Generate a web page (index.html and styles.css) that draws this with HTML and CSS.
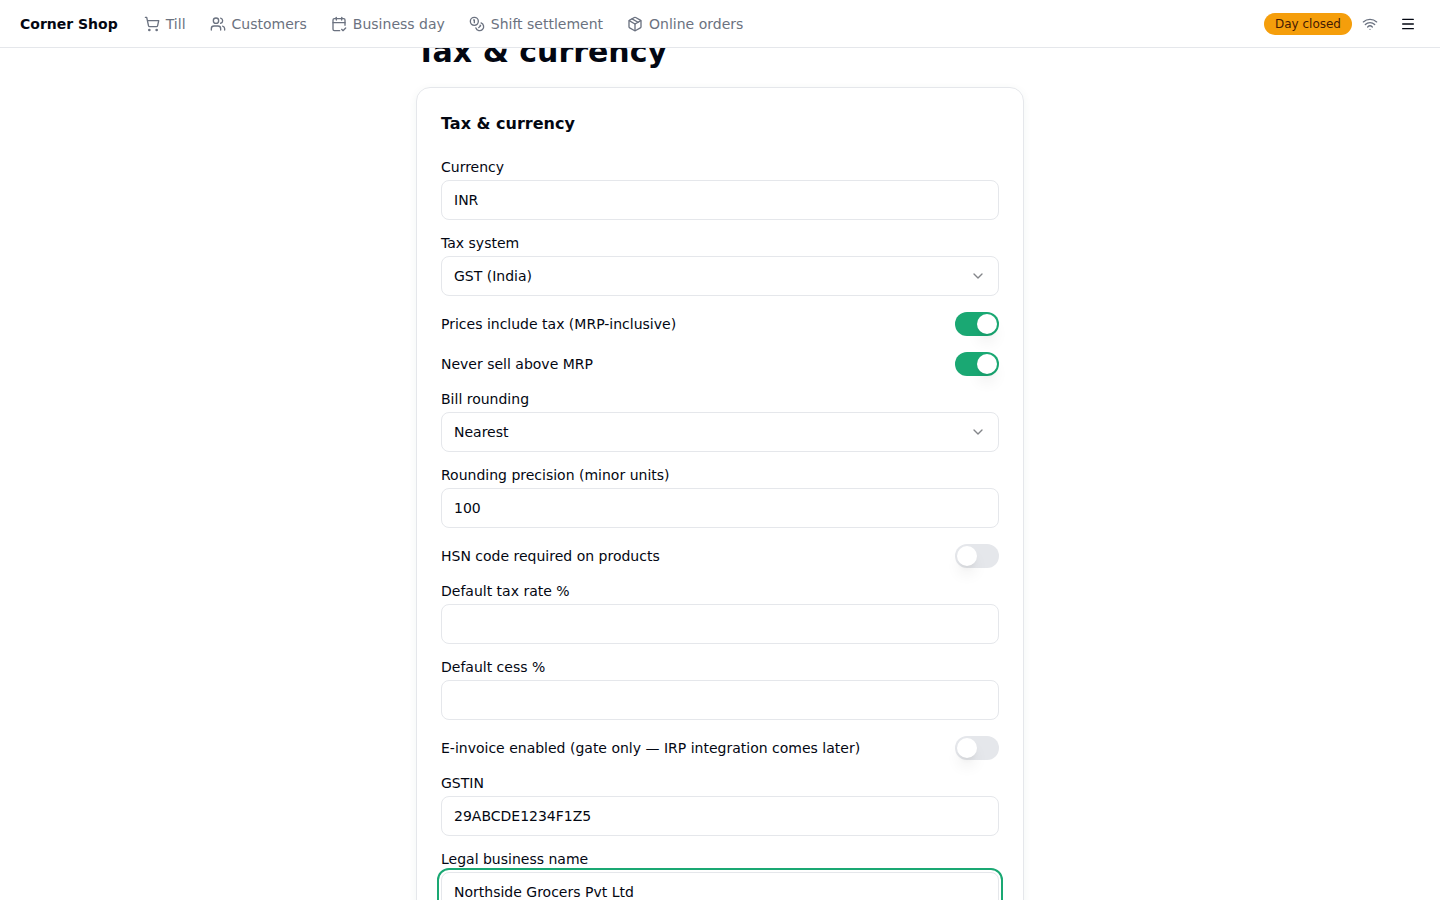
FILE: index.html
```html
<!DOCTYPE html>
<html lang="en">
<head>
<meta charset="utf-8">
<meta name="viewport" content="width=device-width, initial-scale=1">
<title>Tax &amp; currency</title>
<link rel="stylesheet" href="styles.css">
</head>
<body>
<header class="topbar">
  <a class="brand" href="#">Corner Shop</a>
  <nav class="nav" aria-label="Main">
    <a class="nav-link" href="#"><svg class="icon" viewBox="0 0 24 24" aria-hidden="true"><circle cx="8" cy="21" r="1"/><circle cx="19" cy="21" r="1"/><path d="M2.05 2.05h2l2.66 12.42a2 2 0 0 0 2 1.58h9.78a2 2 0 0 0 1.95-1.57l1.65-7.43H5.12"/></svg>Till</a>
    <a class="nav-link" href="#"><svg class="icon" viewBox="0 0 24 24" aria-hidden="true"><path d="M16 21v-2a4 4 0 0 0-4-4H6a4 4 0 0 0-4 4v2"/><path d="M16 3.128a4 4 0 0 1 0 7.744"/><path d="M22 21v-2a4 4 0 0 0-3-3.87"/><circle cx="9" cy="7" r="4"/></svg>Customers</a>
    <a class="nav-link" href="#"><svg class="icon" viewBox="0 0 24 24" aria-hidden="true"><path d="M8 2v4"/><path d="M16 2v4"/><path d="M21 14V6a2 2 0 0 0-2-2H5a2 2 0 0 0-2 2v14a2 2 0 0 0 2 2h8"/><path d="M3 10h18"/><path d="m16 20 2 2 4-4"/></svg>Business day</a>
    <a class="nav-link" href="#"><svg class="icon" viewBox="0 0 24 24" aria-hidden="true"><circle cx="8" cy="8" r="6"/><path d="M18.09 10.37A6 6 0 1 1 10.34 18"/><path d="M7 6h1v4"/><path d="m16.71 13.88.7.71-2.82 2.82"/></svg>Shift settlement</a>
    <a class="nav-link" href="#"><svg class="icon" viewBox="0 0 24 24" aria-hidden="true"><path d="M11 21.73a2 2 0 0 0 2 0l7-4A2 2 0 0 0 21 16V8a2 2 0 0 0-1-1.73l-7-4a2 2 0 0 0-2 0l-7 4A2 2 0 0 0 3 8v8a2 2 0 0 0 1 1.73z"/><path d="M12 22V12"/><path d="M3.29 7 12 12l8.71-5"/><path d="m7.5 4.27 9 5.15"/></svg>Online orders</a>
  </nav>
  <div class="status">
    <span class="badge">Day closed</span>
    <svg class="icon icon-muted" viewBox="0 0 24 24" role="img" aria-label="Online"><path d="M12 20h.01"/><path d="M2 8.82a15 15 0 0 1 20 0"/><path d="M5 12.859a10 10 0 0 1 14 0"/><path d="M8.5 16.429a5 5 0 0 1 7 0"/></svg>
    <button class="menu-button" type="button" aria-label="Menu"><svg class="icon icon-menu" viewBox="0 0 24 24" aria-hidden="true"><path d="M4 5h16"/><path d="M4 12h16"/><path d="M4 19h16"/></svg></button>
  </div>
</header>
<main class="page" id="page">
  <div class="content">
    <h1 class="page-title">Tax &amp; currency</h1>
    <form class="card">
      <h2 class="card-title">Tax &amp; currency</h2>
      <div class="fields">
        <div class="field">
          <label for="currency">Currency</label>
          <input class="control" id="currency" type="text" value="INR">
        </div>
        <div class="field">
          <label for="system">Tax system</label>
          <div class="select">
            <select class="control" id="system"><option>GST (India)</option></select>
            <svg class="icon chevron" viewBox="0 0 24 24" aria-hidden="true"><path d="m6 9 6 6 6-6"/></svg>
          </div>
        </div>
        <div class="toggle">
          <label for="inclusive">Prices include tax (MRP-inclusive)</label>
          <input class="switch" id="inclusive" type="checkbox" role="switch" checked>
        </div>
        <div class="toggle">
          <label for="mrp">Never sell above MRP</label>
          <input class="switch" id="mrp" type="checkbox" role="switch" checked>
        </div>
        <div class="field">
          <label for="rounding">Bill rounding</label>
          <div class="select">
            <select class="control" id="rounding"><option>Nearest</option></select>
            <svg class="icon chevron" viewBox="0 0 24 24" aria-hidden="true"><path d="m6 9 6 6 6-6"/></svg>
          </div>
        </div>
        <div class="field">
          <label for="precision">Rounding precision (minor units)</label>
          <input class="control" id="precision" type="text" inputmode="numeric" value="100">
        </div>
        <div class="toggle">
          <label for="hsn">HSN code required on products</label>
          <input class="switch" id="hsn" type="checkbox" role="switch">
        </div>
        <div class="field">
          <label for="rate">Default tax rate %</label>
          <input class="control" id="rate" type="text" inputmode="decimal">
        </div>
        <div class="field">
          <label for="cess">Default cess %</label>
          <input class="control" id="cess" type="text" inputmode="decimal">
        </div>
        <div class="toggle">
          <label for="einvoice">E-invoice enabled (gate only — IRP integration comes later)</label>
          <input class="switch" id="einvoice" type="checkbox" role="switch">
        </div>
        <div class="field">
          <label for="gstin">GSTIN</label>
          <input class="control" id="gstin" type="text" value="29ABCDE1234F1Z5">
        </div>
        <div class="field">
          <label for="legal">Legal business name</label>
          <input class="control is-active" id="legal" type="text" value="Northside Grocers Pvt Ltd">
        </div>
      </div>
    </form>
  </div>
</main>
<script src="app.js"></script>
</body>
</html>
```

FILE: styles.css
```css
* {
  box-sizing: border-box;
}

body {
  margin: 0;
  height: 100vh;
  display: flex;
  flex-direction: column;
  background: #fff;
  color: #030712;
  font-family: "DejaVu Sans", sans-serif;
  font-size: 14px;
  line-height: 20px;
}

a {
  color: inherit;
  text-decoration: none;
}

.topbar {
  flex: none;
  display: flex;
  align-items: center;
  min-height: 48px;
  padding: 0 16px 0 20px;
  border-bottom: 1px solid #e5e7eb;
}

.brand {
  margin-right: 26px;
  font-weight: 700;
}

.nav {
  display: flex;
  gap: 24px;
  color: #6b7280;
}

.nav-link {
  display: flex;
  align-items: center;
  gap: 6px;
  white-space: nowrap;
}

.icon {
  flex: none;
  width: 16px;
  height: 16px;
  fill: none;
  stroke: currentColor;
  stroke-width: 2;
  stroke-linecap: round;
  stroke-linejoin: round;
}

.icon-muted {
  color: #6b7280;
}

.status {
  display: flex;
  align-items: center;
  gap: 10px;
  margin-left: auto;
}

.badge {
  padding: 3px 11px;
  border-radius: 11px;
  background: #f59e0b;
  color: #451a03;
  font-size: 12px;
  line-height: 16px;
  white-space: nowrap;
}

.menu-button {
  display: grid;
  place-items: center;
  width: 32px;
  height: 32px;
  margin-left: 4px;
  padding: 0;
  border: 0;
  border-radius: 8px;
  background: transparent;
  color: inherit;
}

.page {
  flex: 1;
  min-height: 0;
  padding: 24px;
  overflow-y: auto;
  scrollbar-width: none;
}

.content {
  display: flex;
  flex-direction: column;
  gap: 17px;
  max-width: 608px;
  margin: 0 auto;
}

.page-title {
  margin: 0;
  font-size: 30px;
  line-height: 36px;
}

.card {
  padding: 24px;
  border: 1px solid #e5e7eb;
  border-radius: 14px;
  box-shadow: 0 2px 8px rgba(20, 80, 60, 0.06);
}

.card-title {
  margin: 0 0 24px;
  font-size: 16px;
  line-height: 24px;
}

.fields {
  display: flex;
  flex-direction: column;
  gap: 16px;
}

.field {
  display: flex;
  flex-direction: column;
  gap: 6px;
}

.field label {
  line-height: 14px;
}

.control {
  width: 100%;
  height: 40px;
  padding: 0 12px;
  border: 1px solid #e5e7eb;
  border-radius: 8px;
  background: #fff;
  color: inherit;
  font: inherit;
  appearance: none;
}

.control:focus,
.control.is-active {
  outline: 2px solid #1aa873;
  outline-offset: 2px;
}

.select {
  position: relative;
}

.chevron {
  position: absolute;
  top: 12px;
  right: 13px;
  color: #838589;
  pointer-events: none;
}

.toggle {
  display: flex;
  align-items: center;
  justify-content: space-between;
  gap: 16px;
}

.switch {
  flex: none;
  display: flex;
  width: 44px;
  height: 24px;
  margin: 0;
  padding: 2px;
  border-radius: 12px;
  background: #e5e7eb;
  appearance: none;
}

.switch::before {
  content: "";
  width: 20px;
  height: 20px;
  border-radius: 50%;
  background: #fff;
  box-shadow: 0 10px 15px -3px rgba(0, 0, 0, 0.1), 0 4px 6px -4px rgba(0, 0, 0, 0.1);
}

.switch:checked {
  justify-content: flex-end;
  background: #1aa873;
}
```

FILE: app.js
```js
document.getElementById("page").scrollTop = 38;
```
